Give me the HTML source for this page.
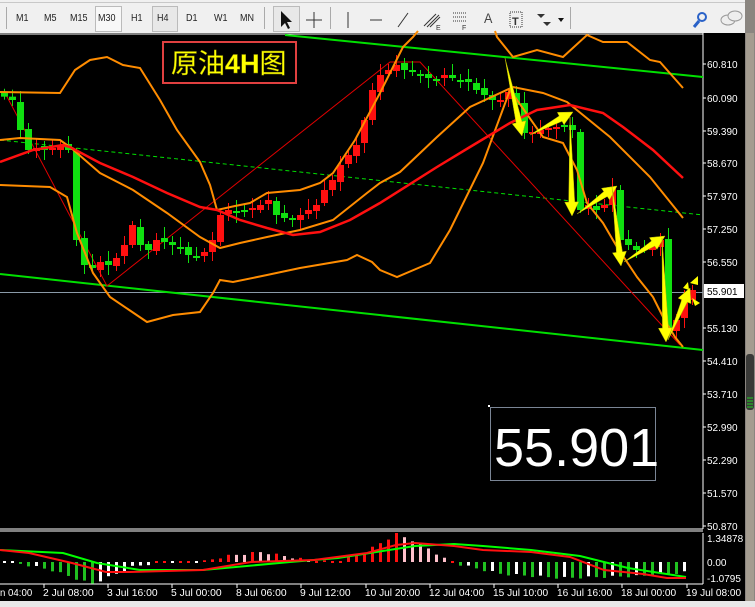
<!DOCTYPE html>
<html><head><meta charset="utf-8">
<style>
html,body{margin:0;padding:0;width:755px;height:607px;overflow:hidden;background:#f0f0f0;font-family:"Liberation Sans",sans-serif;}
#tb{position:absolute;left:0;top:0;width:755px;height:33px;background:#f0f0f0;}
.t{position:absolute;top:13px;font-size:10px;color:#222;transform:scaleX(.9);transform-origin:left;}
.bx{position:absolute;top:6px;height:24px;border:1px solid #bbb;background:#f8f8f8;}
.sep{position:absolute;top:7px;width:1px;height:22px;background:#aaa;}
svg{position:absolute;left:0;top:0;}
</style></head><body>
<div id="tb">
<div style="position:absolute;left:0;top:2px;width:755px;height:1px;background:#c8c8c8"></div>
<div class="bx" style="left:95px;width:25px"></div>
<div class="bx" style="left:152px;width:24px;background:#e8e8e8"></div>
<div class="bx" style="left:273px;width:25px;background:#e8e8e8"></div>
<div class="sep" style="left:6px"></div>
<div class="t" style="left:16px">M1</div><div class="t" style="left:44px">M5</div><div class="t" style="left:70px">M15</div>
<div class="t" style="left:98px">M30</div><div class="t" style="left:131px">H1</div><div class="t" style="left:157px">H4</div>
<div class="t" style="left:186px">D1</div><div class="t" style="left:214px">W1</div><div class="t" style="left:240px">MN</div>
<div class="sep" style="left:264px"></div><div class="sep" style="left:330px"></div><div class="sep" style="left:570px"></div>
<div class="t" style="left:484px;font-size:14px;top:10px;color:#444">A</div>
</div>
<svg id="s" width="755" height="607" viewBox="0 0 755 607">
<path d="M281 11 L281 27 L285 23 L288 29 L290 28 L287 22 L292 22 Z" fill="#111"/>
<path d="M314 12 V28 M306 20 H322" stroke="#333"/>
<path d="M348 12 V28" stroke="#333"/>
<path d="M370 20 H382" stroke="#333"/>
<path d="M398 27 L408 13" stroke="#333"/>
<path d="M424 26 L436 14 M427 27 L439 15 M430 27 L440 17" stroke="#333"/>
<text x="436" y="30" font-size="7" fill="#333">E</text>
<path d="M453 13 H467 M453 17 H467 M453 21 H467" stroke="#333" stroke-dasharray="1 1"/>
<text x="462" y="30" font-size="7" fill="#333">F</text>
<rect x="510" y="12" width="12" height="15" fill="none" stroke="#333" stroke-dasharray="1 1"/>
<text x="512" y="25" font-size="11" font-weight="bold" fill="#333">T</text>
<path d="M537 14 L541 18 L545 14 Z M543 22 L547 26 L551 22 Z" fill="#333"/>
<path d="M558 18 L564 18 L561 22 Z" fill="#111"/>
<circle cx="702" cy="17" r="4" fill="none" stroke="#2a62c8" stroke-width="2"/><path d="M699 21 L694 27" stroke="#2a62c8" stroke-width="3"/>
<ellipse cx="728" cy="20" rx="7" ry="5" fill="#eee" stroke="#999"/><ellipse cx="735" cy="16" rx="7" ry="5" fill="#eee" stroke="#999"/>
<rect x="0" y="33" width="745" height="568" fill="#000"/>
<rect x="745" y="0" width="10" height="607" fill="#8a8580"/>
<rect x="746" y="33" width="8" height="568" fill="#a49c90"/>
<rect x="746" y="354" width="8" height="56" fill="#3a3a38" rx="3"/>
<path d="M747 398 H753 M747 401 H753 M747 404 H753 M747 407 H753" stroke="#2c2"/>
<rect x="0" y="601" width="755" height="6" fill="#e8e8e8"/>
<path d="M703 33 V529 M0 529 H703 M0 531 H703 M703 533 V584 M0 584 H703 M0 34 H703" stroke="#fff" stroke-width="1"/>
<g id="g"></g>
<rect x="163" y="42" width="133" height="41" fill="#000" stroke="#e04040" stroke-width="2"/>
<text x="171" y="73" font-size="27" fill="#ffff00" font-family="'Liberation Sans','Noto Sans CJK SC',sans-serif" stroke="#888800" stroke-width=".4">原油<tspan font-weight="bold">4H</tspan>图</text>
<rect x="490.5" y="407.5" width="165" height="73" fill="#000" stroke="#7a8595"/>
<rect x="488" y="405" width="2" height="2" fill="#fff"/>
<text x="494" y="466" font-size="54" fill="#fff" font-family="'Liberation Sans',sans-serif">55.901</text>
<rect x="704" y="284" width="40" height="14" fill="#fff"/>
<text x="707" y="295" font-size="10" fill="#000">55.901</text>
</svg>
<script>
(function(){
var NS="http://www.w3.org/2000/svg",g=document.getElementById("g");
function el(t,a){var e=document.createElementNS(NS,t);for(var k in a)e.setAttribute(k,a[k]);g.appendChild(e);return e;}
function pl(pts,c,w,extra){var a={points:pts.map(function(p){return p.join(",");}).join(" "),fill:"none",stroke:c,"stroke-width":w};for(var k in extra)a[k]=extra[k];return el("polyline",a);}
el("line",{x1:0,y1:292.5,x2:703,y2:292.5,stroke:"#8a9aa8"});
pl([[285,35],[703,77]],"#00e000",2);
pl([[0,274],[703,350]],"#00e000",2);
pl([[0,140],[703,215]],"#00e000",1,{"stroke-dasharray":"4 3"});
pl([[4,91],[107,286],[390,62],[420,62],[680,345]],"#e00000",1);
var labs=[["60.810",64],["60.090",98],["59.390",131],["58.670",163],["57.970",196],["57.250",229],["56.550",262],["55.130",328],["54.410",361],["53.710",394],["52.990",427],["52.290",460],["51.570",493],["50.870",526]];
labs.forEach(function(l){el("line",{x1:703,y1:l[1],x2:706,y2:l[1],stroke:"#fff"});var t=el("text",{x:707,y:l[1]+4,"font-size":"10",fill:"#fff"});t.textContent=l[0];});
[["1.34878",542],["0.00",566],["-1.0795",582]].forEach(function(l){var t=el("text",{x:707,y:l[1],"font-size":"10",fill:"#fff"});t.textContent=l[0];});
var tl=[["n 04:00",0],["2 Jul 08:00",43],["3 Jul 16:00",107],["5 Jul 00:00",171],["8 Jul 06:00",236],["9 Jul 12:00",300],["10 Jul 20:00",365],["12 Jul 04:00",429],["15 Jul 10:00",493],["16 Jul 16:00",557],["18 Jul 00:00",621],["19 Jul 08:00",686]];
tl.forEach(function(l){var t=el("text",{x:l[1],y:596,"font-size":"10",fill:"#fff",textLength:l[0].length*4.6,lengthAdjust:"spacingAndGlyphs"});t.textContent=l[0];if(l[1]>0)el("line",{x1:l[1]+1,y1:584,x2:l[1]+1,y2:588,stroke:"#fff"});});
var P=[[-10,92],[0,95],[12,100],[20,130],[28,150],[36,148],[44,150],[52,148],[60,145],[68,150],[76,240],[84,265],[92,268],[100,262],[108,265],[116,258],[124,245],[132,225],[140,245],[148,250],[156,240],[164,242],[172,245],[180,248],[188,255],[196,258],[204,252],[212,240],[220,215],[228,210],[236,212],[244,210],[252,208],[260,205],[268,200],[276,215],[284,218],[292,218],[300,215],[308,210],[316,205],[324,190],[332,180],[340,165],[348,155],[356,145],[364,120],[372,90],[380,75],[388,70],[396,65],[404,70],[412,72],[420,75],[428,78],[436,80],[444,75],[452,78],[460,80],[468,82],[476,90],[484,95],[492,100],[500,100],[508,92],[516,105],[524,133],[532,132],[540,130],[548,128],[556,127],[564,125],[572,130],[580,210],[588,205],[596,210],[604,205],[612,188],[620,240],[628,245],[636,250],[644,250],[652,245],[660,240],[668,330],[676,320],[684,300],[692,290]];
function I(x){for(var i=0;i<P.length-1;i++){if(x>=P[i][0]&&x<=P[i+1][0]){var t=(x-P[i][0])/(P[i+1][0]-P[i][0]);return P[i][1]+t*(P[i+1][1]-P[i][1]);}}return P[P.length-1][1];}
for(var x=4,k=0;x<=692;x+=8,k++){var o=I(x-8)+((k*7)%5-2),c=I(x);var up=c<o;var col=up?"#ff1010":"#10e010";var bt=Math.min(o,c),bb=Math.max(o,c);if(bb-bt<2){bb=bt+2;}var hi=bt-3-(k*13)%9,lo=bb+3+(k*11)%8;
el("line",{x1:x+.5,y1:hi,x2:x+.5,y2:lo,stroke:col});el("rect",{x:x-3,y:bt,width:7,height:bb-bt,fill:col});}
pl([[0,92],[60,93],[75,70],[90,60],[107,57],[123,65],[140,68],[160,100],[177,130],[200,162],[210,185],[217,210],[235,206],[250,203],[267,193],[300,190],[320,183],[333,173],[355,140],[380,93],[403,47],[413,37],[418,31]],"#ff8c00",2);
pl([[495,31],[497,37],[513,57],[537,50],[563,57],[587,35],[603,42],[627,42],[650,60],[660,62],[683,88]],"#ff8c00",2);
pl([[0,185],[50,187],[67,197],[77,233],[93,273],[110,297],[147,322],[173,315],[200,312],[213,293],[220,280],[233,282],[267,275],[300,268],[347,260],[357,255],[372,262],[380,270],[397,277],[430,263],[450,230],[483,163],[510,90],[543,137],[563,143],[577,170],[587,203],[603,223],[617,247],[637,277],[653,297],[663,317],[675,337],[683,347]],"#ff8c00",2);
pl([[0,140],[20,138],[60,140],[70,147],[100,173],[133,190],[167,213],[200,237],[220,248],[240,243],[267,237],[300,230],[333,220],[367,193],[380,183],[400,172],[437,137],[470,107],[513,87],[543,93],[567,102],[610,137],[650,177],[683,218]],"#ff8c00",2);
pl([[0,162],[33,150],[63,145],[70,147],[100,163],[133,177],[167,193],[200,207],[217,210],[240,220],[267,228],[293,235],[320,232],[350,220],[380,203],[437,167],[470,147],[510,123],[537,110],[570,105],[603,113],[623,127],[653,150],[683,178]],"#ff1010",2.5);
function arr(x1,y1,x2,y2){var dx=x2-x1,dy=y2-y1,L=Math.hypot(dx,dy),ux=dx/L,uy=dy/L,nx=-uy,ny=ux;var hb=14,hw=7,bw=3;var bx=x2-ux*hb,by=y2-uy*hb;
el("polygon",{points:[[x1,y1],[bx+nx*bw,by+ny*bw],[bx+nx*hw,by+ny*hw],[x2,y2],[bx-nx*hw,by-ny*hw],[bx-nx*bw,by-ny*bw]].map(function(p){return p.join(",");}).join(" "),fill:"#ffff00",stroke:"#b8b800","stroke-width":".5"});}
arr(505,58,522,136);arr(530,135,573,112);arr(570,117,572,216);arr(577,214,617,186);arr(612,187,621,266);arr(624,262,665,236);arr(662,238,666,342);arr(668,340,690,288);
el("polygon",{points:"690,283 698,276 698,285",fill:"#ffff00"});el("polygon",{points:"692,298 700,303 695,306",fill:"#ffff00"});el("polygon",{points:"683,288 688,282 689,290",fill:"#ffff00"});
var V=[[0,0],[20,-2],[50,-8],[90,-22],[110,-14],[130,-5],[160,0],[200,0],[225,6],[260,10],[300,3],[330,0],[360,8],[395,28],[420,18],[445,2],[460,-3],[500,-12],[560,-16],[600,-15],[640,-14],[686,-10]];
function VI(x){for(var i=0;i<V.length-1;i++){if(x>=V[i][0]&&x<=V[i+1][0]){var t=(x-V[i][0])/(V[i+1][0]-V[i][0]);return V[i][1]+t*(V[i+1][1]-V[i][1]);}}return 0;}
var pv=0;for(var x=3,k=0;x<=686;x+=8,k++){var v=VI(x)+((k*5)%3-1);var col;if(v>=0)col=(v>=pv)?"#ff1010":"#ffc0cb";else col=(v<=pv)?"#20c020":"#ffffff";if(Math.abs(v)<1.5){el("rect",{x:x,y:561,width:3,height:2,fill:v>=0?"#ff1010":"#fff"});}else el("rect",{x:x,y:v>0?562-v:562,width:3,height:Math.abs(v),fill:col});pv=v;}
pl([[0,550],[63,553],[97,563],[140,570],[203,570],[290,562],[338,558],[415,546],[454,544],[483,546],[531,550],[580,556],[628,568],[686,577]],"#00ff00",2);
pl([[0,550],[29,553],[72,563],[106,572],[130,572],[203,570],[251,562],[314,560],[367,553],[396,545],[415,543],[454,546],[483,550],[531,552],[570,557],[604,570],[643,574],[667,578],[686,578]],"#ff1010",2);
})();
</script>
</body></html>
